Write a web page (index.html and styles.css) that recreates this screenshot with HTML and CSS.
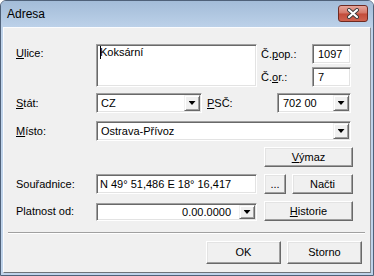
FILE: index.html
```html
<!DOCTYPE html>
<html lang="cs">
<head>
    <meta charset="UTF-8">
    <meta name="viewport" content="width=device-width, initial-scale=1.0">
    <title>Adresa</title>
    <link rel="stylesheet" href="styles.css">
</head>
<body>
    <div class="window">
        <div class="titlebar">
            <div class="title">Adresa</div>
            <div class="close">
                <svg width="14" height="11" viewBox="0 0 14 11">
                    <path d="M3 2 L11 9 M11 2 L3 9" stroke="#3b3b3b" stroke-width="4" stroke-linecap="round"/>
                    <path d="M3 2 L11 9 M11 2 L3 9" stroke="#fff" stroke-width="2.2" stroke-linecap="round"/>
                </svg>
            </div>
        </div>
        <div class="frame">
            <div class="client">
                <div class="form">
                    <div class="row row-street">
                        <div class="label label-top"><u>U</u>lice:</div>
                        <div class="field textarea"><span class="caret"></span>Koksární</div>
                        <div class="numbers">
                            <div class="num-row">
                                <div class="label label-num">Č.<u>p</u>op.:</div>
                                <div class="field input-num">1097</div>
                            </div>
                            <div class="num-row">
                                <div class="label label-num">Č.<u>o</u>r.:</div>
                                <div class="field input-num">7</div>
                            </div>
                        </div>
                    </div>
                    <div class="row row-state">
                        <div class="label"><u>S</u>tát:</div>
                        <div class="field combo combo-state"><span class="value">CZ</span><span class="drop"></span></div>
                        <div class="label label-psc"><u>P</u>SČ:</div>
                        <div class="field combo combo-psc"><span class="value">702 00</span><span class="drop"></span></div>
                    </div>
                    <div class="row row-city">
                        <div class="label"><u>M</u>ísto:</div>
                        <div class="field combo combo-city"><span class="value">Ostrava-Přívoz</span><span class="drop"></span></div>
                    </div>
                    <div class="row row-clear">
                        <div class="btn btn-clear"><u>V</u>ýmaz</div>
                    </div>
                    <div class="row row-coords">
                        <div class="label">Souřadnice:</div>
                        <div class="field input-coords">N 49° 51,486 E 18° 16,417</div>
                        <div class="btn btn-more">...</div>
                        <div class="btn btn-load">Načti</div>
                    </div>
                    <div class="row row-date">
                        <div class="label">Platnost od:</div>
                        <div class="field combo combo-date"><span class="value">0.00.0000</span><span class="drop"></span></div>
                        <div class="btn btn-history"><u>H</u>istorie</div>
                    </div>
                </div>
                <div class="separator"></div>
                <div class="footer">
                    <div class="btn btn-dialog">OK</div>
                    <div class="btn btn-dialog">Storno</div>
                </div>
            </div>
        </div>
    </div>
</body>
</html>
```

FILE: styles.css
```css
* {
    box-sizing: border-box;
}
body {
    margin: 0;
    font-family: "Liberation Sans", Arial, sans-serif;
    font-size: 11px;
    line-height: 13px;
    color: #000;
    background: #fff;
}
.window {
    width: 374px;
    height: 276px;
    border: 1px solid #4f6179;
    border-radius: 6px 6px 0 0;
    background: #bfd3ea;
    display: flex;
    flex-direction: column;
    overflow: hidden;
}
.titlebar {
    height: 26px;
    flex: none;
    display: flex;
    justify-content: space-between;
    align-items: flex-start;
    padding: 0 5px 0 6px;
    background: linear-gradient(#a3bcd8, #bcd1e9);
}
.title {
    font-size: 12px;
    line-height: 14px;
    margin-top: 6px;
}
.close {
    width: 30px;
    height: 17px;
    margin-top: 4px;
    border: 1px solid #6e2a22;
    border-radius: 3px;
    background: linear-gradient(#e6a69b, #d47565 48%, #c24b39 52%, #cf6350);
    display: flex;
    justify-content: center;
    align-items: center;
}
.frame {
    flex: 1;
    display: flex;
    padding: 0 2px 2px;
}
.client {
    flex: 1;
    background: #f0f0f0;
    border: 1px solid;
    border-color: #fbfcfe #8a8f96 #6d7279 #fbfcfe;
}
.form {
    padding-left: 12px;
}
.row {
    display: flex;
    align-items: center;
    height: 20px;
}
.row-street {
    margin-top: 16px;
    height: 43px;
    align-items: flex-start;
}
.row-state {
    margin-top: 6px;
}
.row-city {
    margin-top: 8px;
}
.row-clear {
    margin-top: 6px;
}
.row-coords {
    margin-top: 7px;
}
.row-date {
    margin-top: 7px;
}
.label {
    width: 80px;
    flex: none;
    white-space: nowrap;
}
.label-top {
    margin-top: 3px;
}

/* sunken edit fields */
.field {
    background: #fff;
    border: 1px solid;
    border-color: #a0a0a0 #fff #fff #a0a0a0;
    box-shadow: inset 1px 1px 0 #696969, inset -1px -1px 0 #e3e3e3;
    white-space: nowrap;
    flex: none;
}
.textarea {
    width: 161px;
    height: 43px;
    padding: 1px 3px;
}
.caret {
    display: inline-block;
    width: 1px;
    height: 13px;
    background: #000;
    vertical-align: top;
    margin-right: -1px;
}
.numbers {
    margin-left: 4px;
    height: 43px;
    display: flex;
    flex-direction: column;
    justify-content: space-between;
}
.num-row {
    display: flex;
    align-items: center;
    height: 20px;
}
.label-num {
    width: 51px;
}
.input-num {
    width: 39px;
    height: 20px;
    padding: 3px 5px;
}
.input-coords {
    width: 161px;
    height: 20px;
    padding: 3px 3px;
}

/* combo boxes */
.combo {
    height: 20px;
    display: flex;
    padding: 1px;
}
.combo .value {
    flex: 1;
    padding-left: 3px;
    align-self: center;
}
.drop {
    width: 16px;
    flex: none;
    background: #f0f0f0;
    border: 1px solid;
    border-color: #f0f0f0 #696969 #696969 #f0f0f0;
    box-shadow: inset 1px 1px 0 #fff, inset -1px -1px 0 #a0a0a0;
    display: flex;
    justify-content: center;
    align-items: center;
}
.drop::after {
    content: "";
    width: 7px;
    height: 4px;
    background: #000;
    clip-path: polygon(0 0, 100% 0, 50% 100%);
}
.combo-state {
    width: 106px;
}
.label-psc {
    width: 70px;
    margin-left: 5px;
}
.combo-psc {
    width: 74px;
}
.combo-psc .value {
    padding-left: 4px;
}
.combo-city {
    width: 255px;
}
.combo-date {
    width: 161px;
    height: 18px;
    align-self: flex-end;
}
.combo-date .value {
    text-align: right;
    padding-right: 8px;
}

/* raised buttons */
.btn {
    height: 20px;
    flex: none;
    background: #f0f0f0;
    border: 1px solid;
    border-color: #fff #696969 #696969 #fff;
    box-shadow: inset -1px -1px 0 #a0a0a0, inset 1px 1px 0 #e3e3e3;
    display: flex;
    justify-content: center;
    align-items: center;
}
.btn-clear {
    width: 89px;
    margin-left: 248px;
}
.btn-more {
    width: 22px;
    margin-left: 7px;
    align-items: flex-end;
    padding-bottom: 2px;
}
.btn-load {
    width: 61px;
    margin-left: 6px;
}
.btn-history {
    width: 89px;
    margin-left: 7px;
}
.separator {
    margin: 11px 0 0 4px;
    width: 357px;
    height: 2px;
    border-top: 1px solid #a0a0a0;
    border-bottom: 1px solid #fff;
}
.footer {
    margin-top: 7px;
    padding-right: 8px;
    display: flex;
    justify-content: flex-end;
    gap: 6px;
}
.btn-dialog {
    width: 75px;
    height: 23px;
}
```
